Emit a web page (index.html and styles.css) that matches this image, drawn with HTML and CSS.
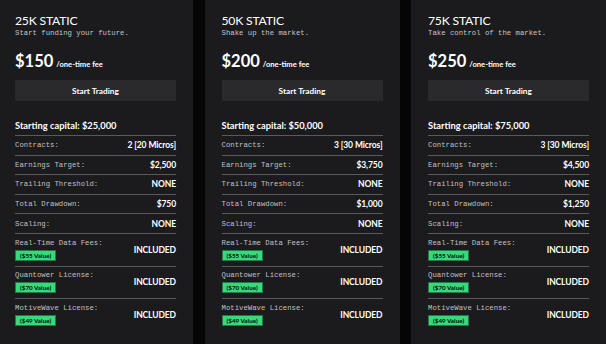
FILE: index.html
```html
<!DOCTYPE html>
<html>
<head>
<meta charset="utf-8">
<link rel="stylesheet" href="styles.css">
</head>
<body>
<div class="plans">
  <div class="card">
    <div class="title">25K STATIC</div>
    <div class="tagline">Start funding your future.</div>
    <div class="price"><span class="amount">$150</span><span class="fee">/one-time fee</span></div>
    <div class="btn">Start Trading</div>
    <div class="capital">Starting capital: $25,000</div>
    <div class="row"><span class="label">Contracts:</span><span class="value">2 [20 Micros]</span></div>
    <div class="row"><span class="label">Earnings Target:</span><span class="value">$2,500</span></div>
    <div class="row"><span class="label">Trailing Threshold:</span><span class="value">NONE</span></div>
    <div class="row"><span class="label">Total Drawdown:</span><span class="value">$750</span></div>
    <div class="row"><span class="label">Scaling:</span><span class="value">NONE</span></div>
    <div class="row tall"><div class="lcol"><span class="label">Real-Time Data Fees:</span><span class="badge">($55 Value)</span></div><span class="value">INCLUDED</span></div>
    <div class="row tall"><div class="lcol"><span class="label">Quantower License:</span><span class="badge">($70 Value)</span></div><span class="value">INCLUDED</span></div>
    <div class="row tall last"><div class="lcol"><span class="label">MotiveWave License:</span><span class="badge">($49 Value)</span></div><span class="value">INCLUDED</span></div>
  </div>
  <div class="card">
    <div class="title">50K STATIC</div>
    <div class="tagline">Shake up the market.</div>
    <div class="price"><span class="amount">$200</span><span class="fee">/one-time fee</span></div>
    <div class="btn">Start Trading</div>
    <div class="capital">Starting capital: $50,000</div>
    <div class="row"><span class="label">Contracts:</span><span class="value">3 [30 Micros]</span></div>
    <div class="row"><span class="label">Earnings Target:</span><span class="value">$3,750</span></div>
    <div class="row"><span class="label">Trailing Threshold:</span><span class="value">NONE</span></div>
    <div class="row"><span class="label">Total Drawdown:</span><span class="value">$1,000</span></div>
    <div class="row"><span class="label">Scaling:</span><span class="value">NONE</span></div>
    <div class="row tall"><div class="lcol"><span class="label">Real-Time Data Fees:</span><span class="badge">($55 Value)</span></div><span class="value">INCLUDED</span></div>
    <div class="row tall"><div class="lcol"><span class="label">Quantower License:</span><span class="badge">($70 Value)</span></div><span class="value">INCLUDED</span></div>
    <div class="row tall last"><div class="lcol"><span class="label">MotiveWave License:</span><span class="badge">($49 Value)</span></div><span class="value">INCLUDED</span></div>
  </div>
  <div class="card">
    <div class="title">75K STATIC</div>
    <div class="tagline">Take control of the market.</div>
    <div class="price"><span class="amount">$250</span><span class="fee">/one-time fee</span></div>
    <div class="btn">Start Trading</div>
    <div class="capital">Starting capital: $75,000</div>
    <div class="row"><span class="label">Contracts:</span><span class="value">3 [30 Micros]</span></div>
    <div class="row"><span class="label">Earnings Target:</span><span class="value">$4,500</span></div>
    <div class="row"><span class="label">Trailing Threshold:</span><span class="value">NONE</span></div>
    <div class="row"><span class="label">Total Drawdown:</span><span class="value">$1,250</span></div>
    <div class="row"><span class="label">Scaling:</span><span class="value">NONE</span></div>
    <div class="row tall"><div class="lcol"><span class="label">Real-Time Data Fees:</span><span class="badge">($55 Value)</span></div><span class="value">INCLUDED</span></div>
    <div class="row tall"><div class="lcol"><span class="label">Quantower License:</span><span class="badge">($70 Value)</span></div><span class="value">INCLUDED</span></div>
    <div class="row tall last"><div class="lcol"><span class="label">MotiveWave License:</span><span class="badge">($49 Value)</span></div><span class="value">INCLUDED</span></div>
  </div>
</div>
</body>
</html>
```

FILE: styles.css
```css
html, body {
  margin: 0;
  padding: 0;
  background: #050505;
  overflow: hidden;
}
body {
  width: 606px;
  height: 344px;
  font-family: "Lato", "Open Sans", sans-serif;
  color: #ffffff;
}
.plans {
  display: flex;
  gap: 11.5px;
  margin-left: -2px;
}
.card {
  flex: 0 0 195px;
  box-sizing: border-box;
  height: 344px;
  background: #1b1b1d;
  padding: 13px 17px 0 17px;
}
.title {
  font-size: 12.2px;
  line-height: 15px;
  font-weight: 400;
  letter-spacing: -0.2px;
}
.tagline {
  font-family: "Liberation Mono", "DejaVu Sans Mono", monospace;
  font-size: 7.3px;
  line-height: 11px;
  color: #c4c4c4;
}
.price {
  display: flex;
  align-items: baseline;
  gap: 3px;
  margin-top: 11px;
  height: 22px;
}
.amount {
  font-size: 16.5px;
  font-weight: 700;
  line-height: 22px;
}
.fee {
  font-size: 7.6px;
  font-weight: 700;
}
.btn {
  margin-top: 8px;
  height: 21px;
  background: #2a2a2c;
  display: flex;
  align-items: center;
  justify-content: center;
  font-size: 8.3px;
  font-weight: 700;
}
.capital {
  margin-top: 18px;
  font-size: 9.3px;
  font-weight: 700;
  line-height: 14px;
  padding-bottom: 2px;
  border-bottom: 1px solid #5a5a5a;
}
.row {
  display: flex;
  justify-content: space-between;
  align-items: center;
  height: 18.6px;
  border-bottom: 1px solid #5a5a5a;
}
.row.tall {
  height: 31.6px;
}
.row.last {
  border-bottom: none;
}
.lcol {
  display: flex;
  flex-direction: column;
  align-items: flex-start;
  gap: 3px;
}
.label {
  font-family: "Liberation Mono", "DejaVu Sans Mono", monospace;
  font-size: 7.3px;
  color: #c0c0c0;
}
.value {
  font-size: 8.5px;
  font-weight: 700;
  letter-spacing: -0.1px;
}
.badge {
  background: #38d97a;
  color: #0a0a0a;
  font-size: 6.3px;
  font-weight: 700;
  padding: 1px 4px;
  line-height: 7px;
  border: 0.5px solid #1f7a45;
}
```
